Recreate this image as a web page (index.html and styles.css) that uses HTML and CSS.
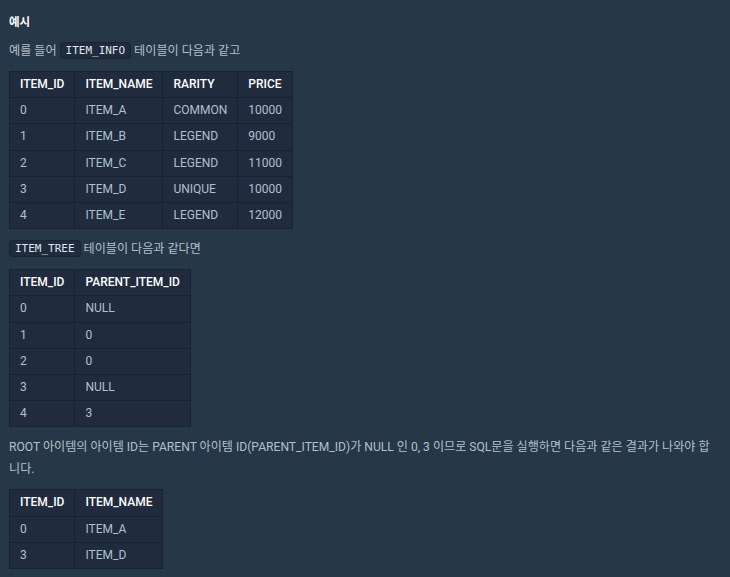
FILE: index.html
```html
<!DOCTYPE html>
<html lang="ko">
<head>
<meta charset="utf-8">
<link rel="stylesheet" href="styles.css">
</head>
<body>
<div class="content">
  <h5 class="title">예시</h5>
  <p class="text">예를 들어 <code class="code">ITEM_INFO</code> 테이블이 다음과 같고</p>
  <table class="tbl">
    <thead><tr><th>ITEM_ID</th><th>ITEM_NAME</th><th>RARITY</th><th>PRICE</th></tr></thead>
    <tbody>
      <tr><td>0</td><td>ITEM_A</td><td>COMMON</td><td>10000</td></tr>
      <tr><td>1</td><td>ITEM_B</td><td>LEGEND</td><td>9000</td></tr>
      <tr><td>2</td><td>ITEM_C</td><td>LEGEND</td><td>11000</td></tr>
      <tr><td>3</td><td>ITEM_D</td><td>UNIQUE</td><td>10000</td></tr>
      <tr><td>4</td><td>ITEM_E</td><td>LEGEND</td><td>12000</td></tr>
    </tbody>
  </table>
  <p class="text"><code class="code">ITEM_TREE</code> 테이블이 다음과 같다면</p>
  <table class="tbl">
    <thead><tr><th>ITEM_ID</th><th>PARENT_ITEM_ID</th></tr></thead>
    <tbody>
      <tr><td>0</td><td>NULL</td></tr>
      <tr><td>1</td><td>0</td></tr>
      <tr><td>2</td><td>0</td></tr>
      <tr><td>3</td><td>NULL</td></tr>
      <tr><td>4</td><td>3</td></tr>
    </tbody>
  </table>
  <p class="text">ROOT 아이템의 아이템 ID는 PARENT 아이템 ID(PARENT_ITEM_ID)가 NULL 인 0, 3 이므로 SQL문을 실행하면 다음과 같은 결과가 나와야 합니다.</p>
  <table class="tbl">
    <thead><tr><th>ITEM_ID</th><th>ITEM_NAME</th></tr></thead>
    <tbody>
      <tr><td>0</td><td>ITEM_A</td></tr>
      <tr><td>3</td><td>ITEM_D</td></tr>
    </tbody>
  </table>
</div>
</body>
</html>
```

FILE: styles.css
```css
html, body {
  margin: 0;
  background: #263747;
}
body {
  font-family: Roboto, "Noto Sans CJK KR", sans-serif;
  color: #b2c0cc;
  font-size: 12px;
}
.content {
  padding: 11px 12px 10px 9px;
}
.title {
  margin: 0 0 7px;
  font-size: 11.5px;
  line-height: 22px;
  font-weight: 700;
  color: #ffffff;
}
.text {
  margin: 0 0 9px;
  font-size: 12.1px;
  line-height: 22px;
}
.code {
  font-family: "DejaVu Sans Mono", "Liberation Mono", monospace;
  font-size: 11px;
  line-height: 14px;
  vertical-align: 1px;
  color: #dfe6ec;
  background: #202b3d;
  border: 1px solid #1a2433;
  border-radius: 4px;
  padding: 1px 5px;
}
.tbl {
  border-collapse: collapse;
  background: #202b3d;
  margin: 0 0 9px;
  font-size: 12px;
}
.tbl th, .tbl td {
  border: 1px solid #172334;
  padding: 2px 10px;
  line-height: 21.2px;
  text-align: left;
}
.tbl th {
  color: #ffffff;
  font-weight: 500;
}
.tbl td {
  color: #b2c0cc;
}
```
